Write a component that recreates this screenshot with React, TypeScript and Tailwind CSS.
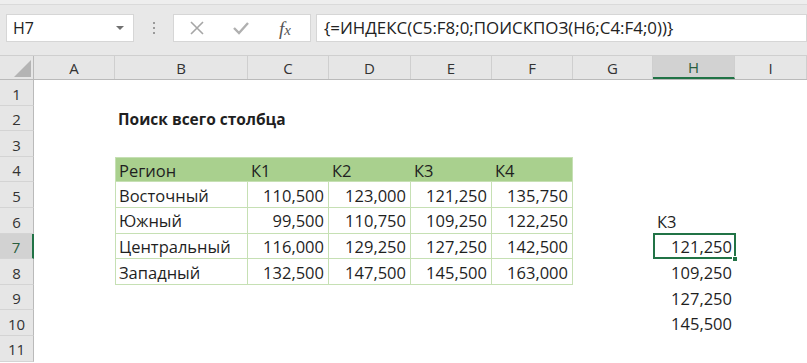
import React from "react";

const cols = [
    { name: "A", w: "w-[81px]" },
    { name: "B", w: "w-[133px]" },
    { name: "C", w: "w-[81px]" },
    { name: "D", w: "w-[82px]" },
    { name: "E", w: "w-[81px]" },
    { name: "F", w: "w-[81px]" },
    { name: "G", w: "w-[80px]" },
    { name: "H", w: "w-[82px]" },
    { name: "I", w: "flex-1" },
];

const tableHead = ["Регион", "К1", "К2", "К3", "К4"];
const tableRows = [
    ["Восточный", "110,500", "123,000", "121,250", "135,750"],
    ["Южный", "99,500", "110,750", "109,250", "122,250"],
    ["Центральный", "116,000", "129,250", "127,250", "142,500"],
    ["Западный", "132,500", "147,500", "145,500", "163,000"],
];
const lookup = ["121,250", "109,250", "127,250", "145,500"];

function Cell({ col, children }: { col: number, children?: React.ReactNode }) {
    return <div className={`${cols[col].w} h-full shrink-0 flex items-center pt-[3px]`}>{children}</div>
}

function SheetRow({ n, children }: { n: number, children: React.ReactNode }) {
    const active = n === 7
    return <div className="flex h-[25.6px]">
        <div className={`w-[34px] shrink-0 flex items-center justify-center pt-[3px] border-b border-[#d4d4d4] text-[15px] ${active
            ? "bg-[#d2d2d2] border-r-2 border-r-[#217346] text-[#2a5e3e]"
            : "bg-[#e6e6e6] border-r border-r-[#bababa] text-[#333]"}`}>{n}</div>
        <div className="flex flex-1 h-full">{children}</div>
    </div>
}

export default function App() {
    return <div className="w-[807px] h-[363px] overflow-hidden bg-white text-[#222] font-['Open_Sans',sans-serif]">
        {/* TOOLBAR */}
        <div className="h-[56px] bg-[#e8e8e8] border-b border-[#cfcfcf] flex flex-col">
            <div className="h-[5px] bg-[#eeeeee] border-b border-[#dadada]" />
            <div className="flex items-center pt-[9px] pl-[6px]">
                <div className="w-[128px] h-[28px] bg-white border border-[#d6d6d6] flex items-center justify-between pl-[6px] pr-[9px]">
                    <span className="text-[16px] text-[#222]">H7</span>
                    <svg width="8" height="5" viewBox="0 0 8 5"><path d="M0 0 L8 0 L4 4 Z" fill="#707070" /></svg>
                </div>
                <div className="w-[39px] flex flex-col items-center gap-[3px]">
                    <span className="w-[2px] h-[2px] bg-[#9a9a9a]" />
                    <span className="w-[2px] h-[2px] bg-[#9a9a9a]" />
                    <span className="w-[2px] h-[2px] bg-[#9a9a9a]" />
                </div>
                <div className="w-[138px] h-[28px] bg-white border border-[#d6d6d6] flex items-center pl-[16px]">
                    <svg width="14" height="14" viewBox="0 0 14 14"><path d="M1 1 L13 13 M13 1 L1 13" stroke="#a6a6a6" strokeWidth="1.6" /></svg>
                    <svg className="ml-[29px]" width="16" height="13" viewBox="0 0 16 13"><path d="M1 6 L6 11 L15 1" stroke="#b0b0b0" strokeWidth="2.4" fill="none" /></svg>
                    <span className="ml-[30px] text-[19px] italic text-[#555] font-['Liberation_Serif',serif] leading-none">f<span className="text-[15px]">x</span></span>
                </div>
                <div className="ml-[5px] flex-1 h-[28px] bg-white border border-[#d6d6d6] flex items-center pl-[7px]">
                    <span className="text-[16.9px] text-[#222]">{"{=ИНДЕКС(C5:F8;0;ПОИСКПОЗ(H6;C4:F4;0))}"}</span>
                </div>
            </div>
        </div>

        {/* COLUMN HEADERS */}
        <div className="flex h-[24px] bg-[#e6e6e6] border-b border-[#bababa]">
            <div className="w-[34px] shrink-0 flex items-end justify-end pr-[2px] pb-[2px] border-r border-[#bababa]">
                <svg width="17" height="17" viewBox="0 0 17 17"><path d="M17 0 L17 17 L0 17 Z" fill="#b4b4b4" /></svg>
            </div>
            {cols.map((c) => <div key={c.name}
                className={`${c.w} shrink-0 flex items-center justify-center pt-[2px] text-[15px] border-r border-[#cfcfcf] ${c.name === "H"
                    ? "bg-[#d2d2d2] border-b-2 border-b-[#217346] text-[#2a5e3e]"
                    : "text-[#333]"}`}>{c.name}</div>)}
        </div>

        {/* SHEET */}
        <div className="text-[16.5px] text-[#1f1f1f]">
            <SheetRow n={1}><Cell col={0} /></SheetRow>
            <SheetRow n={2}>
                <Cell col={0} />
                <Cell col={1}><span className="pl-[3px] text-[15.5px] font-bold whitespace-nowrap">Поиск всего столбца</span></Cell>
            </SheetRow>
            <SheetRow n={3}><Cell col={0} /></SheetRow>
            <SheetRow n={4}>
                <Cell col={0} />
                {tableHead.map((h, i) => <div key={h}
                    className={`${cols[i + 1].w} shrink-0 h-full flex items-center pt-[3px] pl-[3px] bg-[#a9d08e] border-t border-b border-[#c6e0b4] ${i === 0 ? "border-l" : ""} ${i === 4 ? "border-r" : ""}`}>{h}</div>)}
            </SheetRow>
            {tableRows.map((r, ri) => <SheetRow n={ri + 5} key={r[0]}>
                <Cell col={0} />
                {r.map((v, i) => <div key={i}
                    className={`${cols[i + 1].w} shrink-0 h-full flex items-center pt-[3px] border-b border-r border-[#c6e0b4] ${i === 0
                        ? "border-l pl-[3px]"
                        : "justify-end pr-[4px]"}`}>{v}</div>)}
                <Cell col={6} />
                <div className={`${cols[7].w} shrink-0 h-full flex items-center justify-end pt-[3px] pr-[3px] relative`}>
                    {ri === 1 && <span className="absolute left-[4px]">К3</span>}
                    {ri === 2 && <>
                        <span>{lookup[0]}</span>
                        <span className="absolute inset-0 -top-[1px] -right-[1px] border-2 border-[#217346]" />
                        <span className="absolute -right-[3px] -bottom-[3px] w-[6px] h-[6px] bg-[#217346] border border-white" />
                    </>}
                    {ri === 3 && <span>{lookup[1]}</span>}
                </div>
            </SheetRow>)}
            <SheetRow n={9}>
                <Cell col={0} /><Cell col={1} /><Cell col={2} /><Cell col={3} /><Cell col={4} /><Cell col={5} /><Cell col={6} />
                <div className={`${cols[7].w} shrink-0 h-full flex items-center justify-end pt-[3px] pr-[3px]`}>{lookup[2]}</div>
            </SheetRow>
            <SheetRow n={10}>
                <Cell col={0} /><Cell col={1} /><Cell col={2} /><Cell col={3} /><Cell col={4} /><Cell col={5} /><Cell col={6} />
                <div className={`${cols[7].w} shrink-0 h-full flex items-center justify-end pt-[3px] pr-[3px]`}>{lookup[3]}</div>
            </SheetRow>
            <SheetRow n={11}><Cell col={0} /></SheetRow>
        </div>
    </div>
}
